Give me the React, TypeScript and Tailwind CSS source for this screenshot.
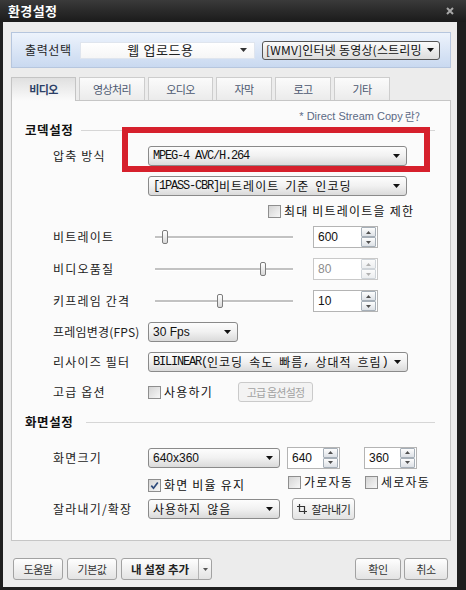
import React from "react";

const KO = "font-['Noto_Sans_CJK_KR','Noto_Sans',sans-serif]";
const MONO = "font-['Liberation_Mono','Noto_Sans_CJK_KR',monospace]";
const SANS = "font-['Liberation_Sans','Noto_Sans_CJK_KR',sans-serif]";

function Mix({ text }: { text: string }) {
  const parts = text.split(/([\uAC00-\uD7A3]+)/);
  return (
    <>
      {parts.map((p, i) =>
        p === "" ? null : /[\uAC00-\uD7A3]/.test(p) ? (
          <span key={i} className={`${KO} text-[12px] leading-[16px] tracking-[1px]`}>
            {p}
          </span>
        ) : (
          <span key={i} className={`${MONO} text-[12px] tracking-[-1.2px] leading-[16px] whitespace-pre`}>
            {p}
          </span>
        )
      )}
    </>
  );
}

function Arrow({ color = "#111" }: { color?: string }) {
  return (
    <svg width="7" height="4" viewBox="0 0 7 4" className="shrink-0">
      <path d="M0 0H7L3.5 4Z" fill={color} />
    </svg>
  );
}

function Select({ className = "", text, sans }: { className?: string; text: string; sans?: boolean }) {
  return (
    <div
      className={`flex h-[20px] items-center justify-between overflow-hidden rounded-[3px] border border-[#8a8a8a] bg-gradient-to-b from-[#fdfdfd] via-[#f1f1f1] to-[#dadada] pl-[4px] pr-[6px] text-[#111] ${className}`}
    >
      <div className="flex items-center whitespace-nowrap">
        {sans ? <span className={`${SANS} text-[12px] leading-[16px]`}>{text}</span> : <Mix text={text} />}
      </div>
      <Arrow />
    </div>
  );
}

function SpinBtn({ up, disabled }: { up?: boolean; disabled?: boolean }) {
  return (
    <div
      className={`flex h-[10px] w-[15px] items-center justify-center rounded-[1px] border bg-gradient-to-b ${
        disabled ? "border-[#cfd4d9] from-[#fbfbfb] to-[#eceef0]" : "border-[#a6afb8] from-[#fdfdfd] to-[#dde1e6]"
      }`}
    >
      <svg width="5" height="3" viewBox="0 0 5 3">
        <path d={up ? "M0 3H5L2.5 0Z" : "M0 0H5L2.5 3Z"} fill={disabled ? "#b0b0b0" : "#505050"} />
      </svg>
    </div>
  );
}

function Spin({ className = "", value, disabled }: { className?: string; value: string; disabled?: boolean }) {
  return (
    <div
      className={`flex h-[22px] items-stretch justify-between border bg-white pl-[4px] pr-[1px] ${
        disabled ? "border-[#c9c9c9]" : "border-[#b4b4b4]"
      } ${className}`}
    >
      <span className={`${SANS} flex items-center text-[12px] leading-none ${disabled ? "text-[#8c8c8c]" : "text-[#111]"}`}>
        {value}
      </span>
      <div className="flex flex-col">
        <SpinBtn up disabled={disabled} />
        <SpinBtn disabled={disabled} />
      </div>
    </div>
  );
}

function Slider({ thumbClass }: { thumbClass: string }) {
  return (
    <div className="relative ml-[7px] flex h-[16px] w-[138px] items-center">
      <div className="h-[3px] w-full border-b border-white bg-[#c2c2c2]" />
      <div
        className={`absolute top-[1px] h-[14px] w-[6px] rounded-[2px] border border-[#7c7c7c] bg-gradient-to-b from-[#ffffff] to-[#d8d8d8] ${thumbClass}`}
      />
    </div>
  );
}

function Check({ checked, label, className = "" }: { checked?: boolean; label: string; className?: string }) {
  return (
    <div className={`flex items-center ${className}`}>
      <div className="flex h-[13px] w-[13px] shrink-0 items-center justify-center border border-[#8e8e8e] bg-gradient-to-br from-[#d4d4d4] to-[#f7f7f7]">
        {checked && (
          <svg width="9" height="9" viewBox="0 0 9 9">
            <path d="M1.3 4.6L3.5 7.2L7.8 1.4" stroke="#2d4a7c" strokeWidth="1.7" fill="none" />
          </svg>
        )}
      </div>
      <span className={`${KO} ml-[3px] text-[12px] leading-[16px] tracking-[1.2px] text-[#111] whitespace-nowrap`}>{label}</span>
    </div>
  );
}

function Label({ text, className = "w-[95px] tracking-[1.2px]" }: { text: string; className?: string }) {
  return (
    <span className={`${KO} shrink-0 text-[12px] leading-[16px] text-[#222] whitespace-nowrap ${className}`}>{text}</span>
  );
}

function Section({ title, lineClass }: { title: string; lineClass: string }) {
  return (
    <div className="flex h-[16px] items-center pl-[13px] pr-[15px]">
      <span className={`${KO} text-[12.5px] font-bold leading-[16px] tracking-[0.6px] text-[#111]`}>{title}</span>
      <div className={`h-px flex-1 bg-[#d6d6d6] ${lineClass}`} />
    </div>
  );
}

function Btn({ className = "", children }: { className?: string; children: React.ReactNode }) {
  return (
    <div
      className={`flex h-[22px] items-center justify-center rounded-[3px] border border-[#a2a2a2] bg-gradient-to-b from-[#fefefe] to-[#e3e3e3] ${KO} text-[11px] leading-[14px] text-[#333] ${className}`}
    >
      {children}
    </div>
  );
}

const tabs = [
  { t: "비디오", w: "w-[65px]" },
  { t: "영상처리", w: "w-[66px]" },
  { t: "오디오", w: "w-[65px]" },
  { t: "자막", w: "w-[56px]" },
  { t: "로고", w: "w-[56px]" },
  { t: "기타", w: "w-[56px]" },
];

export default function App() {
  return (
    <div className="flex h-[590px] w-[466px] flex-col overflow-hidden bg-[#1e1e1e]">
      {/* title bar */}
      <div className="flex h-[22px] shrink-0 items-center justify-between bg-gradient-to-b from-[#3a3a3a] to-[#1b1b1b] pl-[8px] pr-[12px]">
        <span className={`${KO} text-[13px] font-bold leading-[16px] tracking-[0.4px] text-white`}>환경설정</span>
        <svg width="8" height="8" viewBox="0 0 8 8">
          <path d="M1 1L7 7M7 1L1 7" stroke="#a8a8a8" strokeWidth="2" />
        </svg>
      </div>

      {/* body */}
      <div className="mb-[3px] ml-[3px] mr-[9px] flex flex-1 flex-col bg-[#ececec] pl-[8px] pr-[6px]">
        {/* output bar */}
        <div className="mt-[10px] flex h-[36px] items-center border border-[#b6c6de] bg-gradient-to-b from-[#edf3fc] to-[#c9d9f0] pl-[13px]">
          <span className={`${KO} w-[55px] text-[12px] leading-[16px] tracking-[0.6px] text-[#222]`}>출력선택</span>
          <div className="flex h-[17px] w-[175px] items-center border border-[#dfe5ee] bg-gradient-to-b from-white to-[#f6f6f6] pr-[7px]">
            <span className={`${KO} flex-1 text-center text-[13px] leading-[16px] tracking-[0.6px] text-[#222]`}>웹 업로드용</span>
            <Arrow color="#333" />
          </div>
          <div className="ml-[7px] flex h-[19px] w-[178px] items-center justify-between overflow-hidden rounded-[3px] border border-[#555] bg-gradient-to-b from-[#fbfbfb] to-[#dcdcdc] pl-[3px] pr-[5px] text-[#111]">
            <div className="flex min-w-0 items-center whitespace-nowrap">
              <span className={`${KO} text-[12px] leading-[16px] tracking-[0.2px]`}>[WMV]인터넷 동영상(스트리밍</span>
            </div>
            <Arrow />
          </div>
        </div>

        {/* tabs */}
        <div className="relative z-10 mt-[9px] flex h-[23px] items-end">
          {tabs.map((tb, i) =>
            i === 0 ? (
              <div
                key={i}
                className={`-mb-px flex h-[24px] ${tb.w} items-center justify-center border border-b-0 border-[#c4c4c4] bg-gradient-to-b from-[#e0e0e0] to-[#fbfbfb] ${KO} text-[11px] font-bold tracking-[-0.6px] text-[#2c3f66]`}
              >
                {tb.t}
              </div>
            ) : (
              <div
                key={i}
                className={`ml-[3px] flex h-[23px] ${tb.w} items-center justify-center border border-b-0 border-[#cdcdcd] bg-gradient-to-b from-[#fbfbfb] to-[#ebebeb] ${KO} text-[11px] tracking-[-0.6px] text-[#4c5870]`}
              >
                {tb.t}
              </div>
            )
          )}
        </div>

        {/* panel */}
        <div className="relative flex h-[441px] flex-col border border-[#c6c6c6] bg-[#fbfbfb]">
          <div className={`mt-[9px] flex h-[12px] items-center justify-end pr-[30px] ${SANS} text-[11px] leading-[14px] text-[#5b6a85]`}>
            * Direct Stream Copy <span className={`${KO} ml-[2px] text-[11px] leading-[14px]`}>란?</span>
          </div>
          <Section title="코덱설정" lineClass="ml-[8px]" />

          <div className="mt-[8px] flex h-[20px] items-center pl-[41px]">
            <Label text="압축 방식" />
            <Select className="w-[259px]" text="MPEG-4 AVC/H.264" />
          </div>
          <div className="mt-[10px] flex h-[20px] items-center pl-[136px]">
            <Select className="w-[259px]" text="[1PASS-CBR]비트레이트 기준 인코딩" />
          </div>
          <div className="mt-[8px] flex h-[14px] items-center pl-[256px]">
            <Check label="최대 비트레이트을 제한" />
          </div>

          <div className="mt-[8px] flex h-[22px] items-center pl-[41px]">
            <Label text="비트레이트" />
            <Slider thumbClass="left-[7px]" />
            <Spin className="ml-[20px] w-[65px]" value="600" />
          </div>
          <div className="mt-[10px] flex h-[22px] items-center pl-[41px]">
            <Label text="비디오품질" />
            <Slider thumbClass="left-[105px]" />
            <Spin className="ml-[20px] w-[65px]" value="80" disabled />
          </div>
          <div className="mt-[10px] flex h-[22px] items-center pl-[41px]">
            <Label text="키프레임 간격" />
            <Slider thumbClass="left-[62px]" />
            <Spin className="ml-[20px] w-[65px]" value="10" />
          </div>

          <div className="mt-[10px] flex h-[20px] items-center pl-[41px]">
            <Label text="프레임변경(FPS)" className="w-[95px] tracking-[0.2px]" />
            <Select className="w-[90px]" text="30 Fps" sans />
          </div>
          <div className="mt-[10px] flex h-[20px] items-center pl-[41px]">
            <Label text="리사이즈 필터" />
            <Select className="w-[260px]" text="BILINEAR(인코딩 속도 빠름, 상대적 흐림)" />
          </div>
          <div className="mt-[10px] flex h-[20px] items-center pl-[41px]">
            <Label text="고급 옵션" />
            <Check label="사용하기" className="w-[90px]" />
            <div
              className={`flex h-[20px] w-[75px] items-center justify-center rounded-[3px] border border-[#cacaca] bg-[#f3f3f3] ${KO} text-[11px] leading-[14px] tracking-[-0.8px] text-[#a2a2a2]`}
            >
              고급 옵션설정
            </div>
          </div>

          <div className="mt-[12px]">
            <Section title="화면설정" lineClass="ml-[13px]" />
          </div>

          <div className="mt-[17px] flex h-[21px] items-center pl-[41px]">
            <Label text="화면크기" />
            <Select className="w-[132px]" text="640x360" sans />
            <Spin className="ml-[7px] h-[21px] w-[53px]" value="640" />
            <Spin className="ml-[24px] h-[21px] w-[53px]" value="360" />
          </div>
          <div className="mt-[6px] flex h-[16px] items-start pl-[136px]">
            <Check checked label="화면 비율 유지" className="mt-[3px] w-[140px]" />
            <Check label="가로자동" className="w-[77px]" />
            <Check label="세로자동" />
          </div>
          <div className="mt-[9px] flex h-[20px] items-center pl-[41px]">
            <Label text="잘라내기/확장" />
            <Select className="w-[132px]" text="사용하지 않음" />
            <Btn className="ml-[12px] h-[20px] w-[63px]">
              <svg width="10" height="10" viewBox="0 0 10 10" className="mr-[5px]">
                <path d="M2.5 0V7.5H10M0 2.5H7.5V10" stroke="#333" strokeWidth="1.2" fill="none" />
              </svg>
              <span className="tracking-[-0.4px] text-[#222]">잘라내기</span>
            </Btn>
          </div>

          {/* red annotation box */}
          <div className="pointer-events-none absolute left-[110px] top-[26px] h-[45px] w-[308px] border-[6px] border-[#d6202c]" />
        </div>

        {/* bottom buttons */}
        <div className="mt-[17px] flex h-[22px] items-center pl-[2px] pr-[3px]">
          <Btn className="w-[50px] tracking-[-0.4px]">도움말</Btn>
          <Btn className="ml-[4px] w-[50px] tracking-[-0.4px]">기본값</Btn>
          <div className="ml-[4px] flex h-[22px] w-[91px] items-stretch overflow-hidden rounded-[3px] border border-[#a2a2a2] bg-gradient-to-b from-[#fefefe] to-[#e3e3e3]">
            <span className={`${KO} flex flex-1 items-center justify-center text-[11.5px] font-bold leading-[14px] text-[#222]`}>
              내 설정 추가
            </span>
            <div className="flex w-[13px] items-center justify-center border-l border-[#b4b4b4]">
              <svg width="5" height="3" viewBox="0 0 5 3">
                <path d="M0 0H5L2.5 3Z" fill="#555" />
              </svg>
            </div>
          </div>
          <div className="flex-1" />
          <Btn className="w-[46px] tracking-[-0.4px]">확인</Btn>
          <Btn className="ml-[3px] w-[44px] tracking-[-0.4px]">취소</Btn>
        </div>
      </div>
    </div>
  );
}
